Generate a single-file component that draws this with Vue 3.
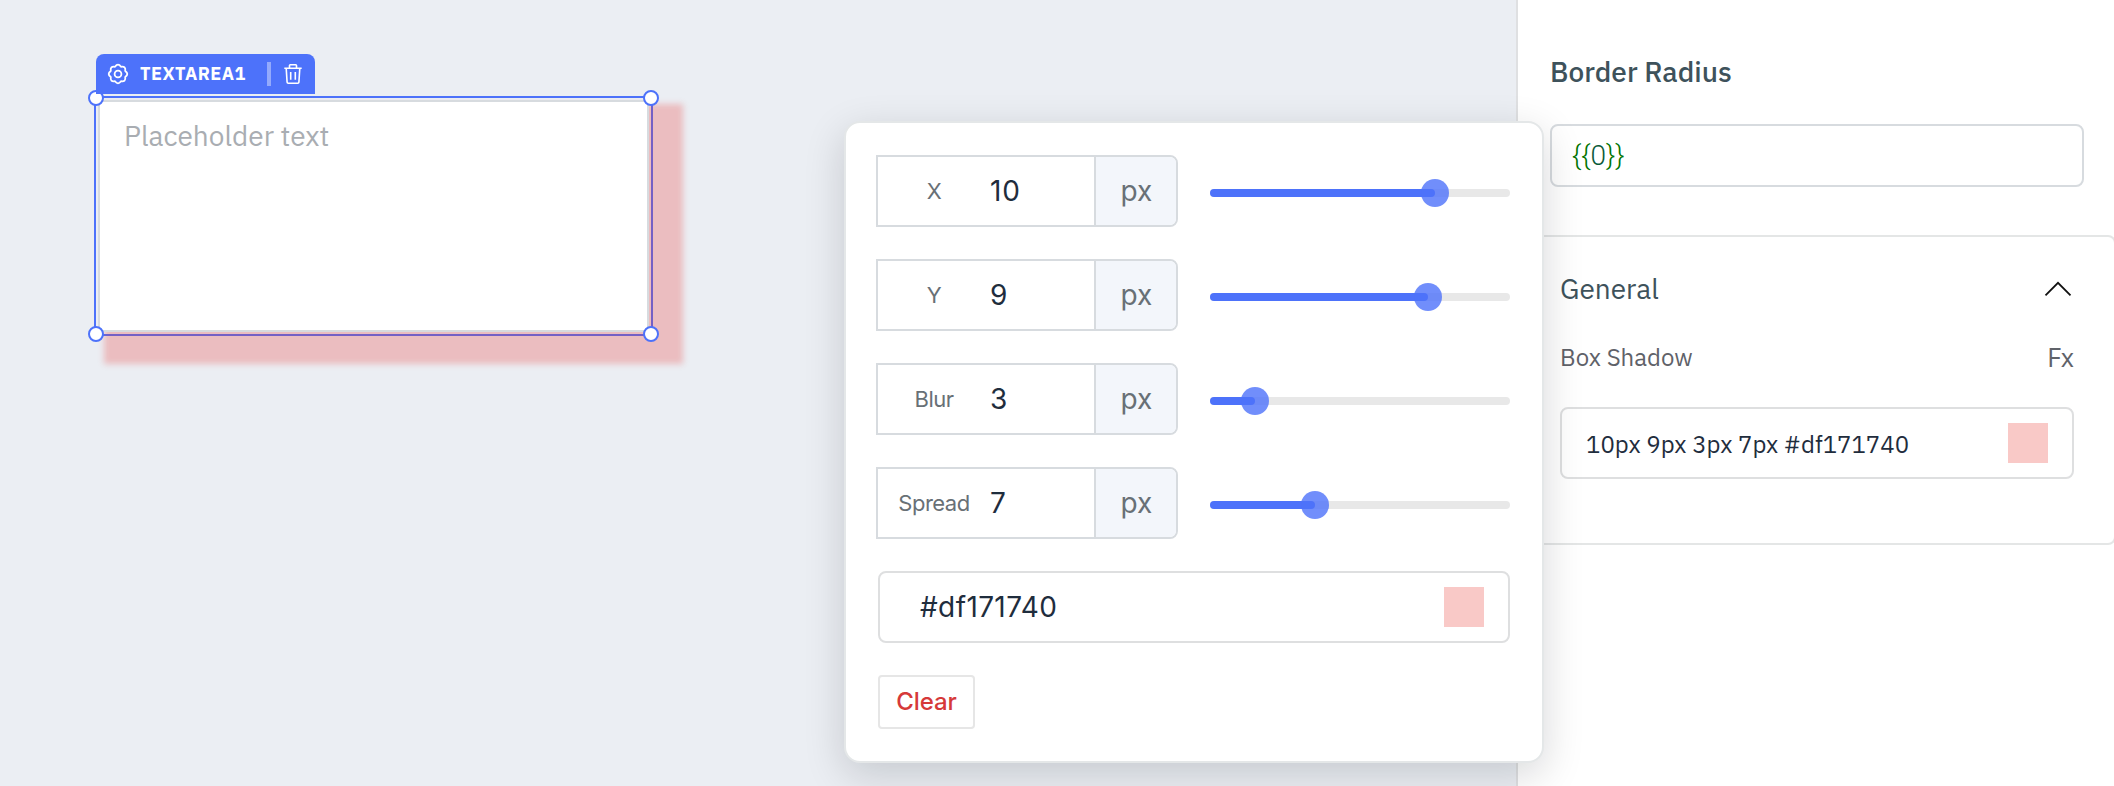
<script setup>
import { ref } from 'vue'

const fields = ref([
  { label: 'X', value: 10, percent: 75 },
  { label: 'Y', value: 9, percent: 72.5 },
  { label: 'Blur', value: 3, percent: 15 },
  { label: 'Spread', value: 7, percent: 35 },
])
const color = '#df171740'
const radius = '0'
</script>

<template>
  <div class="page">
    <main class="canvas">
      <div class="widget">
        <div class="selection"></div>
        <div class="textarea">Placeholder text</div>
        <i class="handle top left"></i>
        <i class="handle top right"></i>
        <i class="handle bottom left"></i>
        <i class="handle bottom right"></i>
        <div class="tag">
          <svg class="icon" width="22" height="22" viewBox="0 0 22 22" fill="none" stroke="currentColor" stroke-width="1.8" stroke-linejoin="round">
            <path d="M8 3.800Q11 -.4 14 3.800Q19.060 2.940 18.200 8Q22.400 11 18.200 14Q19.060 19.060 14 18.200Q11 22.400 8 18.200Q2.940 19.060 3.800 14Q-.4 11 3.800 8Q2.940 2.940 8 3.800Z" />
            <circle cx="11" cy="11" r="3.400" />
          </svg>
          <span class="tag-name">TEXTAREA1</span>
          <span class="tag-divider"></span>
          <svg class="icon" width="18" height="20" viewBox="0 0 18 20" fill="none" stroke="currentColor" stroke-width="1.6">
            <path d="M.3 4.300H17.700M5.500 4.300V1.600Q5.500 .8 6.300 .8H11.700Q12.500 .8 12.500 1.600V4.300M2.200 4.300L3.100 18.200Q3.200 19.200 4.200 19.200H13.800Q14.800 19.200 14.900 18.200L15.800 4.300M6.700 8V15.800M11.300 8V15.800" />
          </svg>
        </div>
      </div>
    </main>

    <aside class="inspector">
      <h2 class="title">Border Radius</h2>
      <div class="code-input"><span class="brace" v-text="'{{'"></span><span class="number">{{ radius }}</span><span class="brace" v-text="'}}'"></span></div>
      <section class="section">
        <header class="section-head">
          <span class="section-name">General</span>
          <svg class="chevron" width="28" height="16" viewBox="0 0 28 16" fill="none" stroke="#111" stroke-width="1.8">
            <path d="M1.500 14.300L14 1.800L26.500 14.300" />
          </svg>
        </header>
        <div class="prop-head">
          <span class="prop-name">Box Shadow</span>
          <span class="fx">Fx</span>
        </div>
        <div class="shadow-input">
          <span class="shadow-value">10px 9px 3px 7px #df171740</span>
          <span class="swatch"></span>
        </div>
      </section>
    </aside>

    <div class="popover">
      <div v-for="f in fields" :key="f.label" class="row">
        <div class="field">
          <span class="label">{{ f.label }}</span>
          <span class="value">{{ f.value }}</span>
          <span class="unit">px</span>
        </div>
        <div class="slider">
          <div class="fill" :style="{ width: f.percent + '%' }"></div>
          <div class="knob" :style="{ left: f.percent + '%' }"></div>
        </div>
      </div>
      <div class="color-input">
        <span>{{ color }}</span>
        <span class="swatch"></span>
      </div>
      <button class="clear">Clear</button>
    </div>
  </div>
</template>

<style>
body {
  overflow: hidden;
}
</style>

<style scoped>
.page,
.page * {
  box-sizing: border-box;
}
.page {
  position: relative;
  display: flex;
  width: 2114px;
  height: 786px;
  overflow: hidden;
  background: #fff;
  font-family: "IBM Plex Sans", Roboto, "Liberation Sans", sans-serif;
}
.canvas {
  position: relative;
  flex: 0 0 1516px;
  background: #ebeef3;
}

/* Selected widget */
.widget {
  position: absolute;
  left: 94px;
  top: 96px;
  width: 559px;
  height: 240px;
  padding: 4px;
}
.selection {
  position: absolute;
  inset: 0;
  border: 2px solid #4d72fa;
}
.textarea {
  position: relative;
  height: 232px;
  width: 551px;
  padding: 16px 24px;
  border: 2px solid #d7dbdf;
  background: #fff;
  box-shadow: 20px 18px 6px 14px #ec2c2840;
  color: #a9adb2;
  font-size: 28px;
  line-height: 36px;
}
.handle {
  position: absolute;
  width: 16px;
  height: 16px;
  border: 2px solid #4d72fa;
  border-radius: 50%;
  background: #fff;
}
.handle.left { left: -6px; }
.handle.right { right: -6px; }
.handle.top { top: -6px; }
.handle.bottom { bottom: -6px; }
.tag {
  position: absolute;
  left: 2px;
  top: -42px;
  display: flex;
  align-items: center;
  width: 219px;
  height: 40px;
  padding: 0 13px 0 11px;
  border-radius: 8px 8px 0 0;
  background: #4d72fa;
  color: #fff;
}
.icon {
  flex: none;
}
.tag-name {
  flex: 1;
  margin: -1px 0 0 11px;
  font-size: 18px;
  font-weight: 700;
  line-height: 24px;
  letter-spacing: 0.5px;
}
.tag-divider {
  width: 4px;
  height: 24px;
  margin-right: 13px;
  background: rgba(255, 255, 255, 0.4);
}

/* Inspector */
.inspector {
  flex: 0 0 598px;
  padding: 54px 0 0;
  border-left: 2px solid #dfe0e2;
  overflow: hidden;
}
.title {
  margin: 0 0 34px 32px;
  color: #3e525b;
  font-size: 28px;
  font-weight: 500;
  line-height: 36px;
}
.code-input {
  width: 534px;
  height: 63px;
  margin-left: 32px;
  padding: 0 20px;
  border: 2px solid #d7dbdf;
  border-radius: 8px;
  font-family: Roboto, sans-serif;
  font-size: 28px;
  font-weight: 300;
  line-height: 60px;
}
.brace { color: #007400; }
.number { color: #0a5a3a; }
.section {
  width: 598px;
  height: 310px;
  margin-top: 48px;
  padding: 33px 40px 0;
  border: 2px solid #e4e6e6;
  border-radius: 8px;
}
.section-head,
.prop-head {
  display: flex;
  align-items: center;
  justify-content: space-between;
}
.section-head {
  height: 36px;
  color: #3e525b;
  font-size: 28px;
}
.chevron {
  margin: 1px 2px 0 0;
}
.prop-head {
  height: 32px;
  margin-top: 35px;
  color: #5f6269;
  font-size: 24px;
}
.fx { font-size: 26px; }
.shadow-input,
.color-input {
  display: flex;
  align-items: center;
  justify-content: space-between;
  height: 72px;
  border: 2px solid #dedfe0;
  border-radius: 8px;
}
.shadow-input {
  margin-top: 34px;
  padding: 0 24px;
  color: #1f2d3d;
  font-size: 24px;
}
.shadow-value {
  padding-top: 2px;
}
.swatch {
  width: 40px;
  height: 40px;
  background: #f9c9c7;
}

/* Shadow popover */
.popover {
  position: absolute;
  left: 844px;
  top: 121px;
  width: 700px;
  height: 642px;
  padding: 32px 32px 0 30px;
  border: 2px solid #e4e7e8;
  border-radius: 16px;
  background: #fff;
  box-shadow: 0 12px 40px rgba(8, 12, 16, 0.16);
  font-family: Inter, Roboto, sans-serif;
}
.row {
  display: flex;
  align-items: center;
  justify-content: space-between;
  height: 72px;
  margin-bottom: 32px;
}
.field {
  display: flex;
  align-items: center;
  width: 302px;
  height: 72px;
  border: 2px solid #d7dbdf;
  border-radius: 0 8px 8px 0;
  overflow: hidden;
}
.label {
  width: 112px;
  color: #687076;
  font-size: 22px;
  text-align: center;
  letter-spacing: -0.5px;
}
.value {
  flex: 1;
  color: #1f2d3d;
  font-size: 28px;
  letter-spacing: 0.8px;
}
.unit {
  display: flex;
  align-items: center;
  justify-content: center;
  width: 82px;
  height: 100%;
  padding-left: 1px;
  border-left: 2px solid #d7dbdf;
  background: #f3f6fb;
  color: #687076;
  font-size: 28px;
}
.slider {
  position: relative;
  width: 300px;
  height: 8px;
  margin-top: 4px;
  border-radius: 4px;
  background: #e8e8e8;
}
.fill {
  height: 8px;
  border-radius: 4px;
  background: #4d72fa;
}
.knob {
  position: absolute;
  top: -10px;
  width: 28px;
  height: 28px;
  margin-left: -14px;
  border-radius: 50%;
  background: rgba(77, 114, 250, 0.8);
}
.color-input {
  margin-left: 2px;
  padding: 0 24px 0 40px;
  color: #1f2d3d;
  font-size: 28px;
  letter-spacing: 0.38px;
}
.clear {
  display: block;
  width: 97px;
  height: 54px;
  margin: 32px 0 0 2px;
  padding: 0 0 2px 0;
  border: 2px solid #e6e6e6;
  border-radius: 4px;
  background: #fff;
  color: #d63939;
  font-family: inherit;
  font-size: 24px;
  font-weight: 500;
  letter-spacing: -0.1px;
}
</style>
